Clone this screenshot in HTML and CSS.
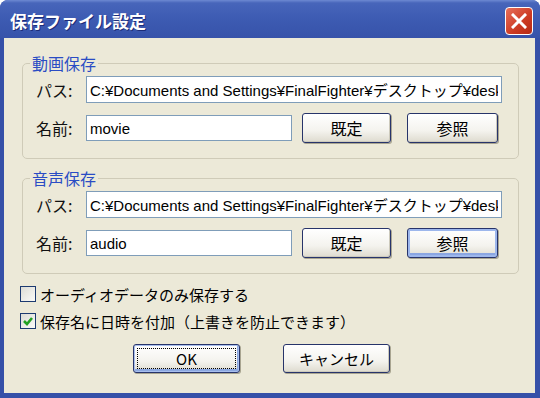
FILE: index.html
```html
<!DOCTYPE html>
<html>
    <head>
        <meta charset="utf-8">
        <title>保存ファイル設定</title>
        <link rel="stylesheet" href="styles.css">
    </head>
    <body>
        <div class="window">
            <div class="titlebar">
                <span class="title">保存ファイル設定</span>
                <div class="close">
                    <svg width="16" height="16" viewBox="0 0 16 16">
                        <path d="M2 2 L14 14 M14 2 L2 14" stroke="#fff" stroke-width="3" stroke-linecap="square"/>
                    </svg>
                </div>
            </div>

            <div class="content">
                <fieldset class="group">
                    <legend>動画保存</legend>
                    <div class="row">
                        <label>パス:</label>
                        <input class="path" type="text" value="C:¥Documents and Settings¥FinalFighter¥デスクトップ¥desktop">
                    </div>
                    <div class="row">
                        <label>名前:</label>
                        <input class="name" type="text" value="movie">
                        <button class="btn default-btn">既定</button>
                        <button class="btn browse">参照</button>
                    </div>
                </fieldset>

                <fieldset class="group second">
                    <legend>音声保存</legend>
                    <div class="row">
                        <label>パス:</label>
                        <input class="path" type="text" value="C:¥Documents and Settings¥FinalFighter¥デスクトップ¥desktop">
                    </div>
                    <div class="row">
                        <label>名前:</label>
                        <input class="name" type="text" value="audio">
                        <button class="btn default-btn">既定</button>
                        <button class="btn browse hot">参照</button>
                    </div>
                </fieldset>

                <div class="check first">
                    <span class="box"></span>
                    <span>オーディオデータのみ保存する</span>
                </div>
                <div class="check">
                    <span class="box">
                        <svg width="12" height="12" viewBox="0 0 12 12">
                            <path d="M2 6 L5 9 L10 3" fill="none" stroke="#21a121" stroke-width="2.6"/>
                        </svg>
                    </span>
                    <span>保存名に日時を付加（上書きを防止できます）</span>
                </div>

                <div class="actions">
                    <button class="btn ok">OK</button>
                    <button class="btn cancel">キャンセル</button>
                </div>
            </div>
        </div>
    </body>
</html>
```

FILE: styles.css
```css
body {
    margin: 0;
    background: #fff;
    font-family: "Noto Sans CJK JP", sans-serif;
}

.window {
    width: 540px;
    height: 398px;
    display: flex;
    flex-direction: column;
    border-radius: 8px 8px 0 0;
    background: #3550a8;
    overflow: hidden;
}

/* title bar */
.titlebar {
    height: 38px;
    flex: none;
    display: flex;
    align-items: center;
    justify-content: space-between;
    padding: 0 7px 0 10px;
    background: linear-gradient(#6d89d2 0, #4765ba 3px, #3d5bb2 50%, #3753aa 100%);
}
.title {
    color: #fff;
    font-size: 17px;
    font-weight: bold;
    text-shadow: 1px 1px 0 #1d2d78;
    margin-top: 2px;
}
.close {
    width: 26px;
    height: 26px;
    border: 1px solid #fff;
    border-radius: 4px;
    background: linear-gradient(135deg, #e8705c, #cc3a22 60%, #b52a15);
    display: flex;
    align-items: center;
    justify-content: center;
    margin-top: 3px;
}

/* dialog body */
.content {
    flex: 1;
    margin: 0 5px 5px 4px;
    padding: 0 16px;
    background: #ece9d8;
    display: flex;
    flex-direction: column;
}

.group {
    margin: 16px 0 0 2px;
    padding: 4px 16px 15px 13px;
    border: 1px solid #cfcbb8;
    border-radius: 5px;
    min-width: 0;
}
.group.second { margin-top: 10px; }
.group legend {
    font-size: 16px;
    line-height: 18px;
    color: #2a4cc4;
    padding: 0 2px;
    margin-left: -6px;
}

.row {
    display: flex;
    align-items: center;
}
.row + .row { margin-top: 10px; }
.row label {
    width: 50px;
    flex: none;
    font-size: 16px;
    color: #111;
}

input {
    box-sizing: border-box;
    border: 1px solid #7f9db9;
    background: #fff;
    font-family: "Liberation Sans", "Noto Sans CJK JP", sans-serif;
    font-size: 15px;
    color: #000;
    padding: 0 3px;
    outline: none;
}
.path {
    width: 417px;
    height: 27px;
}
.name {
    width: 206px;
    height: 26px;
}

.btn {
    box-sizing: border-box;
    height: 30px;
    border: 1px solid #27346a;
    border-radius: 3px;
    background: linear-gradient(#ffffff, #f4f3ee 60%, #dedbcf);
    box-shadow: inset -1px -1px 0 #cdcabc, 1px 1px 0 #a9a591;
    font-family: "Noto Sans CJK JP", sans-serif;
    font-size: 16px;
    color: #000;
    padding: 0;
}
.default-btn {
    width: 89px;
    margin-left: 10px;
}
.browse {
    width: 91px;
    margin-left: 16px;
}
.hot {
    box-shadow: inset 0 0 0 2px #9db7ec, inset 0 -3px 0 1px #8aa6e2, 1px 1px 0 #a9a591;
}

/* checkboxes */
.check {
    display: flex;
    align-items: center;
    height: 20px;
    margin-left: 0;
    font-size: 15px;
    color: #000;
}
.check.first { margin-top: 10px; }
.check + .check { margin-top: 7px; }
.box {
    box-sizing: border-box;
    width: 16px;
    height: 16px;
    margin-right: 4px;
    border: 1px solid #1c3a70;
    background: linear-gradient(135deg, #dcdcd5, #fafaf8);
    display: flex;
    align-items: center;
    justify-content: center;
}

/* ok / cancel */
.actions {
    display: flex;
    margin: 13px 0 0 113px;
    gap: 43px;
}
.ok, .cancel {
    width: 107px;
    height: 29px;
    font-size: 15px;
}
.ok {
    box-shadow: inset 0 0 0 1px #a8bfee, inset -1px -2px 0 1px #8ca8e0, 1px 1px 0 #a9a591;
    outline: 1px dotted #000;
    outline-offset: -5px;
}
```
